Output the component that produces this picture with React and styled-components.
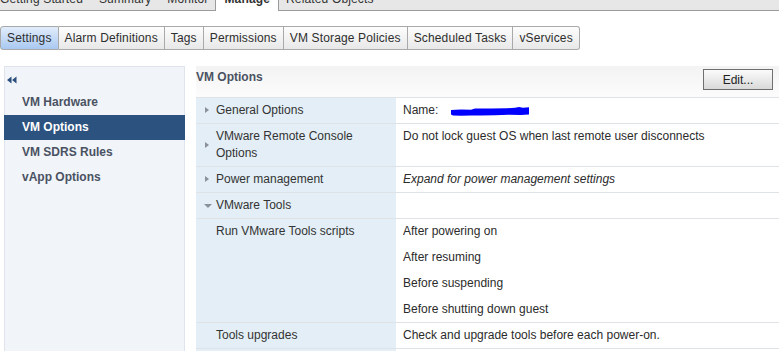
import styled, { createGlobalStyle } from "styled-components";

const GlobalStyle = createGlobalStyle`
  html, body {
    margin: 0;
    padding: 0;
    overflow: hidden;
    background: #ffffff;
  }
  body {
    font-family: "Liberation Sans", Arial, sans-serif;
    font-size: 12px;
    color: #333333;
  }
`;

const topTabs = ["Getting Started", "Summary", "Monitor", "Manage", "Related Objects"];
const subTabs = [
  "Settings",
  "Alarm Definitions",
  "Tags",
  "Permissions",
  "VM Storage Policies",
  "Scheduled Tasks",
  "vServices",
];
const menu = ["VM Hardware", "VM Options", "VM SDRS Rules", "vApp Options"];

function App() {
  return (
    <Page>
      <GlobalStyle />
      <TopBar>
        {topTabs.map((t) => (
          <TopTab key={t} $active={t === "Manage"}>
            {t}
          </TopTab>
        ))}
      </TopBar>

      <SubTabs>
        {subTabs.map((t, i) => (
          <SubTab
            key={t}
            $active={i === 0}
            $first={i === 0}
            $last={i === subTabs.length - 1}
          >
            {t}
          </SubTab>
        ))}
      </SubTabs>

      <Body>
        <Sidebar>
          <SidebarHead>
            <svg width="10" height="8" viewBox="0 0 10 8">
              <path d="M0 4 L4.5 0.5 L4.5 7.5 Z M5 4 L9.5 0.5 L9.5 7.5 Z" fill="#2b4f7c" />
            </svg>
          </SidebarHead>
          {menu.map((m) => (
            <MenuItem key={m} $active={m === "VM Options"}>
              {m}
            </MenuItem>
          ))}
        </Sidebar>

        <Main>
          <MainHeader>
            <Title>VM Options</Title>
            <EditButton>Edit...</EditButton>
          </MainHeader>

          <Table>
            <Row>
              <Label>
                <Arrow />
                <span>General Options</span>
              </Label>
              <Value>
                <NameLine>
                  Name:
                  <Redacted viewBox="0 0 78 9">
                    <path
                      d="M0 3 L10 2.6 L20 2.8 L24 1.6 L40 1.4 L56 1.2 L64 0.8 L68 0 L72 0.8 L78 0.2 L78 7.6 L70 8 L58 7.8 L44 8.2 L30 8.4 L20 8.6 L10 8.8 L2 8.6 L0 7.6 Z"
                      fill="#0000ff"
                    />
                  </Redacted>
                </NameLine>
              </Value>
            </Row>
            <Row>
              <Label>
                <Arrow />
                <span>VMware Remote Console Options</span>
              </Label>
              <Value>Do not lock guest OS when last remote user disconnects</Value>
            </Row>
            <Row>
              <Label>
                <Arrow />
                <span>Power management</span>
              </Label>
              <Value>
                <em>Expand for power management settings</em>
              </Value>
            </Row>
            <Row>
              <Label>
                <Arrow $open />
                <span>VMware Tools</span>
              </Label>
              <Value />
            </Row>
            <Row>
              <Label $sub>Run VMware Tools scripts</Label>
              <Value>
                <Line>After powering on</Line>
                <Line>After resuming</Line>
                <Line>Before suspending</Line>
                <Line>Before shutting down guest</Line>
              </Value>
            </Row>
            <Row>
              <Label $sub>Tools upgrades</Label>
              <Value>Check and upgrade tools before each power-on.</Value>
            </Row>
            <Row>
              <Label $sub>&nbsp;</Label>
              <Value />
            </Row>
          </Table>
        </Main>
      </Body>
    </Page>
  );
}

export default App;

const Page = styled.div`
  width: 779px;
  height: 351px;
  overflow: hidden;
  display: flex;
  flex-direction: column;
`;

const TopBar = styled.div`
  height: 11px;
  overflow: hidden;
  display: flex;
  align-items: flex-end;
  margin-left: -8px;
  background: linear-gradient(to top, #9b9b9b 1px, #e7e7e7 1px);
  flex-shrink: 0;
`;

const TopTab = styled.div`
  padding: 6px 8px 4px;
  line-height: 15px;
  font-size: 12px;
  letter-spacing: 0.15px;
  white-space: nowrap;
  color: #333;
  font-weight: ${(p) => (p.$active ? "bold" : "normal")};
  background: ${(p) => (p.$active ? "#ffffff" : "transparent")};
  border-left: 1px solid ${(p) => (p.$active ? "#9b9b9b" : "transparent")};
  border-right: 1px solid ${(p) => (p.$active ? "#9b9b9b" : "transparent")};
  margin: 0 -1px;
`;

const SubTabs = styled.div`
  display: flex;
  margin-top: 15px;
  height: 24px;
  flex-shrink: 0;
`;

const SubTab = styled.div`
  height: 24px;
  box-sizing: border-box;
  padding: 0 6px;
  line-height: 22px;
  font-size: 12px;
  letter-spacing: 0.15px;
  white-space: nowrap;
  color: #2e2e2e;
  border: 1px solid #a9a9a9;
  border-left: ${(p) => (p.$first ? "1px solid #a9a9a9" : "none")};
  border-radius: ${(p) => (p.$first ? "3px 0 0 3px" : p.$last ? "0 3px 3px 0" : "0")};
  background: ${(p) =>
    p.$active
      ? "linear-gradient(#e2edfb, #a9c8f1)"
      : "linear-gradient(#fdfdfd, #e8e8e8)"};
`;

const Body = styled.div`
  flex: 1;
  display: flex;
  gap: 11px;
  padding-left: 4px;
  margin-top: 16px;
  min-height: 0;
`;

const Sidebar = styled.div`
  width: 181px;
  box-sizing: border-box;
  flex-shrink: 0;
  background: #f1f4f9;
  border: 1px solid #dfe4ec;
  border-bottom: none;
`;

const SidebarHead = styled.div`
  height: 23px;
  display: flex;
  align-items: center;
  padding-left: 2px;
  padding-top: 2px;
  box-sizing: border-box;
`;

const MenuItem = styled.div`
  height: 25px;
  line-height: 25px;
  padding-left: 18px;
  margin: 0 -1px;
  font-weight: bold;
  font-size: 12px;
  color: ${(p) => (p.$active ? "#ffffff" : "#4a5262")};
  background: ${(p) => (p.$active ? "#2c527f" : "transparent")};
`;

const Main = styled.div`
  flex: 1;
  display: flex;
  flex-direction: column;
  min-width: 0;
`;

const MainHeader = styled.div`
  height: 31px;
  flex-shrink: 0;
  box-sizing: border-box;
  display: flex;
  justify-content: space-between;
  align-items: flex-start;
  padding: 3px 6px 0 0;
  background: linear-gradient(#f3f3f3, #fcfcfc);
`;

const Title = styled.div`
  font-weight: bold;
  font-size: 12px;
  line-height: 16px;
  color: #4a5262;
`;

const EditButton = styled.button`
  width: 70px;
  height: 21px;
  padding: 0;
  font-family: "Liberation Sans", Arial, sans-serif;
  font-size: 12px;
  color: #222;
  border: 1px solid #6f6f6f;
  border-radius: 0;
  background: linear-gradient(#fbfbfb, #d9d9d9);
`;

const Table = styled.div`
  display: flex;
  flex-direction: column;
`;

const Row = styled.div`
  display: grid;
  grid-template-columns: 200px 1fr;
  flex-shrink: 0;
  border-top: 1px solid #e0e3e6;
  line-height: 17px;
  font-size: 12px;
`;

const Label = styled.div`
  background: #e3eef6;
  padding: 4px 8px 4px ${(p) => (p.$sub ? "20px" : "8px")};
  display: flex;
  align-items: flex-start;
  color: #333;
`;

const Arrow = styled.span`
  align-self: center;
  flex-shrink: 0;
  width: 12px;
  height: 8px;
  position: relative;

  &::before {
    content: "";
    position: absolute;
    left: ${(p) => (p.$open ? "0" : "1px")};
    top: ${(p) => (p.$open ? "2px" : "0.5px")};
    border: ${(p) =>
      p.$open
        ? "4px solid transparent; border-top: 4px solid #8a9199; border-bottom: none"
        : "3.5px solid transparent; border-left: 4px solid #8a9199; border-right: none"};
  }
`;

const Value = styled.div`
  padding: 4px 7px;
  color: #2b2b2b;
  display: flex;
  flex-direction: column;
  align-items: flex-start;

  & > em {
    font-style: italic;
  }
`;

const NameLine = styled.div`
  display: flex;
  align-items: center;
  gap: 13px;
`;

const Redacted = styled.svg`
  display: block;
  flex-shrink: 0;
  width: 78px;
  height: 9px;
  margin-top: 2px;
`;

const Line = styled.div`
  padding-bottom: 9px;

  &:last-child {
    padding-bottom: 0;
  }
`;
